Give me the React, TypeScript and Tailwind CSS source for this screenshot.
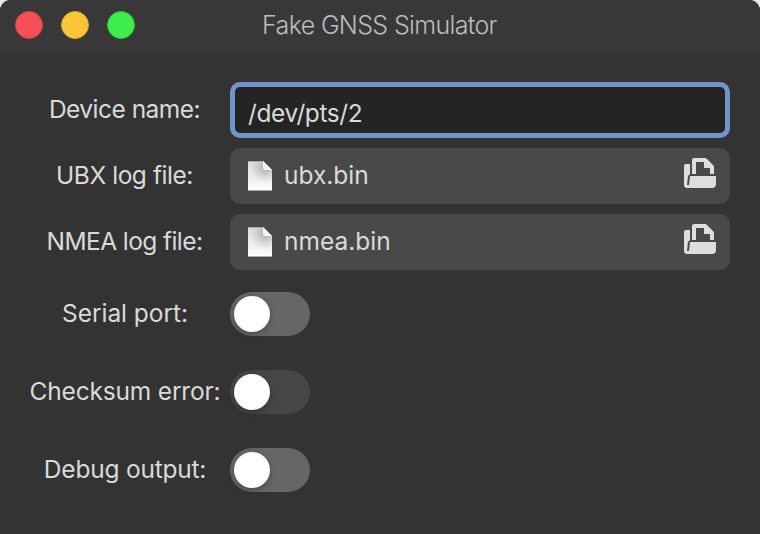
import type { ReactNode } from "react";

function Row({ label, spacing, height, children }: { label: string; spacing: string; height: string; children: ReactNode }) {
  return (
    <div className={`flex items-center gap-[10px] ${height}`}>
      <div className="flex w-[190px] shrink-0 justify-center pb-[2px]">
        <span className={`whitespace-nowrap ${spacing}`}>{label}</span>
      </div>
      {children}
    </div>
  );
}

function OpenIcon() {
  return (
    <svg width="32" height="30" viewBox="0 0 32 30" fill="#dedede">
      <path d="M2 6H6V16L4 18L3 27H0V8Q0 6 2 6Z" />
      <path d="M10 0H21Q22 0 23 1L29 7Q30 8 30 9V16H26V10H20V4H12V16H8V2Q8 0 10 0Z" />
      <path d="M6 18H32V26Q32 30 28 30H4Q0 30 0 26.9H5Z" />
    </svg>
  );
}

function FileIcon({ id }: { id: string }) {
  return (
    <svg width="24" height="30" viewBox="0 0 24 30">
      <defs>
        <linearGradient id={`${id}-page`} x1="0" y1="0" x2="0" y2="1">
          <stop offset="0" stopColor="#dcdcdc" />
          <stop offset="0.65" stopColor="#f0f0f0" />
          <stop offset="1" stopColor="#fff" />
        </linearGradient>
        <radialGradient id={`${id}-shade`} gradientUnits="userSpaceOnUse" cx="17" cy="7" r="15">
          <stop offset="0" stopColor="#888" stopOpacity=".6" />
          <stop offset="1" stopColor="#aaa" stopOpacity="0" />
        </radialGradient>
      </defs>
      <path d="M0 0H15L24 9V30H0Z" fill={`url(#${id}-page)`} />
      <path d="M0 0H15L24 9V30H0Z" fill={`url(#${id}-shade)`} />
      <path d="M15 0L24 9H17Q15 9 15 7Z" fill="#f4f4f4" />
      <path d="M0 .5H15M0 29.5H24" stroke="#aaa" strokeWidth="1" />
    </svg>
  );
}

function FileButton({ id, name, spacing }: { id: string; name: string; spacing: string }) {
  return (
    <button className="flex h-[56px] w-[500px] items-center rounded-[10px] bg-[#494949] pr-[14px] pl-[18px] text-left">
      <FileIcon id={id} />
      <span className={`ml-[12px] flex-1 pb-[2px] ${spacing}`}>{name}</span>
      <span className="pb-[6px]"><OpenIcon /></span>
    </button>
  );
}

function Toggle({ track }: { track: string }) {
  return (
    <button role="switch" aria-checked="false" className={`flex h-[44px] w-[80px] items-center rounded-full pl-[4px] ${track}`}>
      <span className="size-[36px] rounded-full bg-white shadow-[0_2px_6px_rgba(0,0,0,0.3)]" />
    </button>
  );
}

export default function App() {
  return (
    <div className="h-[534px] w-[760px] bg-[#e8e8e8]">
      <div className="h-full overflow-hidden rounded-t-[11px] bg-[#333333] font-['Inter',sans-serif] text-[24.5px] leading-[30px] font-normal text-[#dadada]">
        <header className="grid h-[52px] grid-cols-[1fr_auto_1fr] items-center bg-[#383838] pb-[2px]">
          <div className="flex gap-[18px] pl-[15px]">
            <span className="size-[28px] rounded-full border border-[#d7434c] bg-[#f55058]" />
            <span className="size-[28px] rounded-full border border-[#dca832] bg-[#fcc437]" />
            <span className="size-[28px] rounded-full border border-[#26c938] bg-[#3ded4b]" />
          </div>
          <h1 className="pr-[1px] text-[25px] font-light tracking-[-0.64px] whitespace-nowrap text-[#bcbcbc]">Fake GNSS Simulator</h1>
        </header>
        <main className="flex flex-col gap-[10px] pt-[30px] pl-[30px]">
          <Row label="Device name:" spacing="pr-[1px] tracking-[-0.52px]" height="h-[56px]">
            <div className="flex h-[56px] w-[500px] items-center rounded-[10px] border-[5px] border-[#7294ca] bg-[#242424] pt-[6px] pl-[13px]">
              <span className="tracking-[-0.4px]">/dev/pts/2</span>
            </div>
          </Row>
          <Row label="UBX log file:" spacing="pr-[1px] tracking-[-0.45px]" height="h-[56px]">
            <FileButton id="ubx" name="ubx.bin" spacing="tracking-[0px]" />
          </Row>
          <Row label="NMEA log file:" spacing="pr-[1px] tracking-[-0.58px]" height="h-[56px]">
            <FileButton id="nmea" name="nmea.bin" spacing="tracking-[0px]" />
          </Row>
          <Row label="Serial port:" spacing="tracking-[-0.05px]" height="h-[68px]"><Toggle track="bg-[#666666]" /></Row>
          <Row label="Checksum error:" spacing="tracking-[-0.18px]" height="h-[68px]"><Toggle track="bg-[#464646]" /></Row>
          <Row label="Debug output:" spacing="tracking-[-0.22px]" height="h-[68px]"><Toggle track="bg-[#666666]" /></Row>
        </main>
      </div>
    </div>
  );
}
